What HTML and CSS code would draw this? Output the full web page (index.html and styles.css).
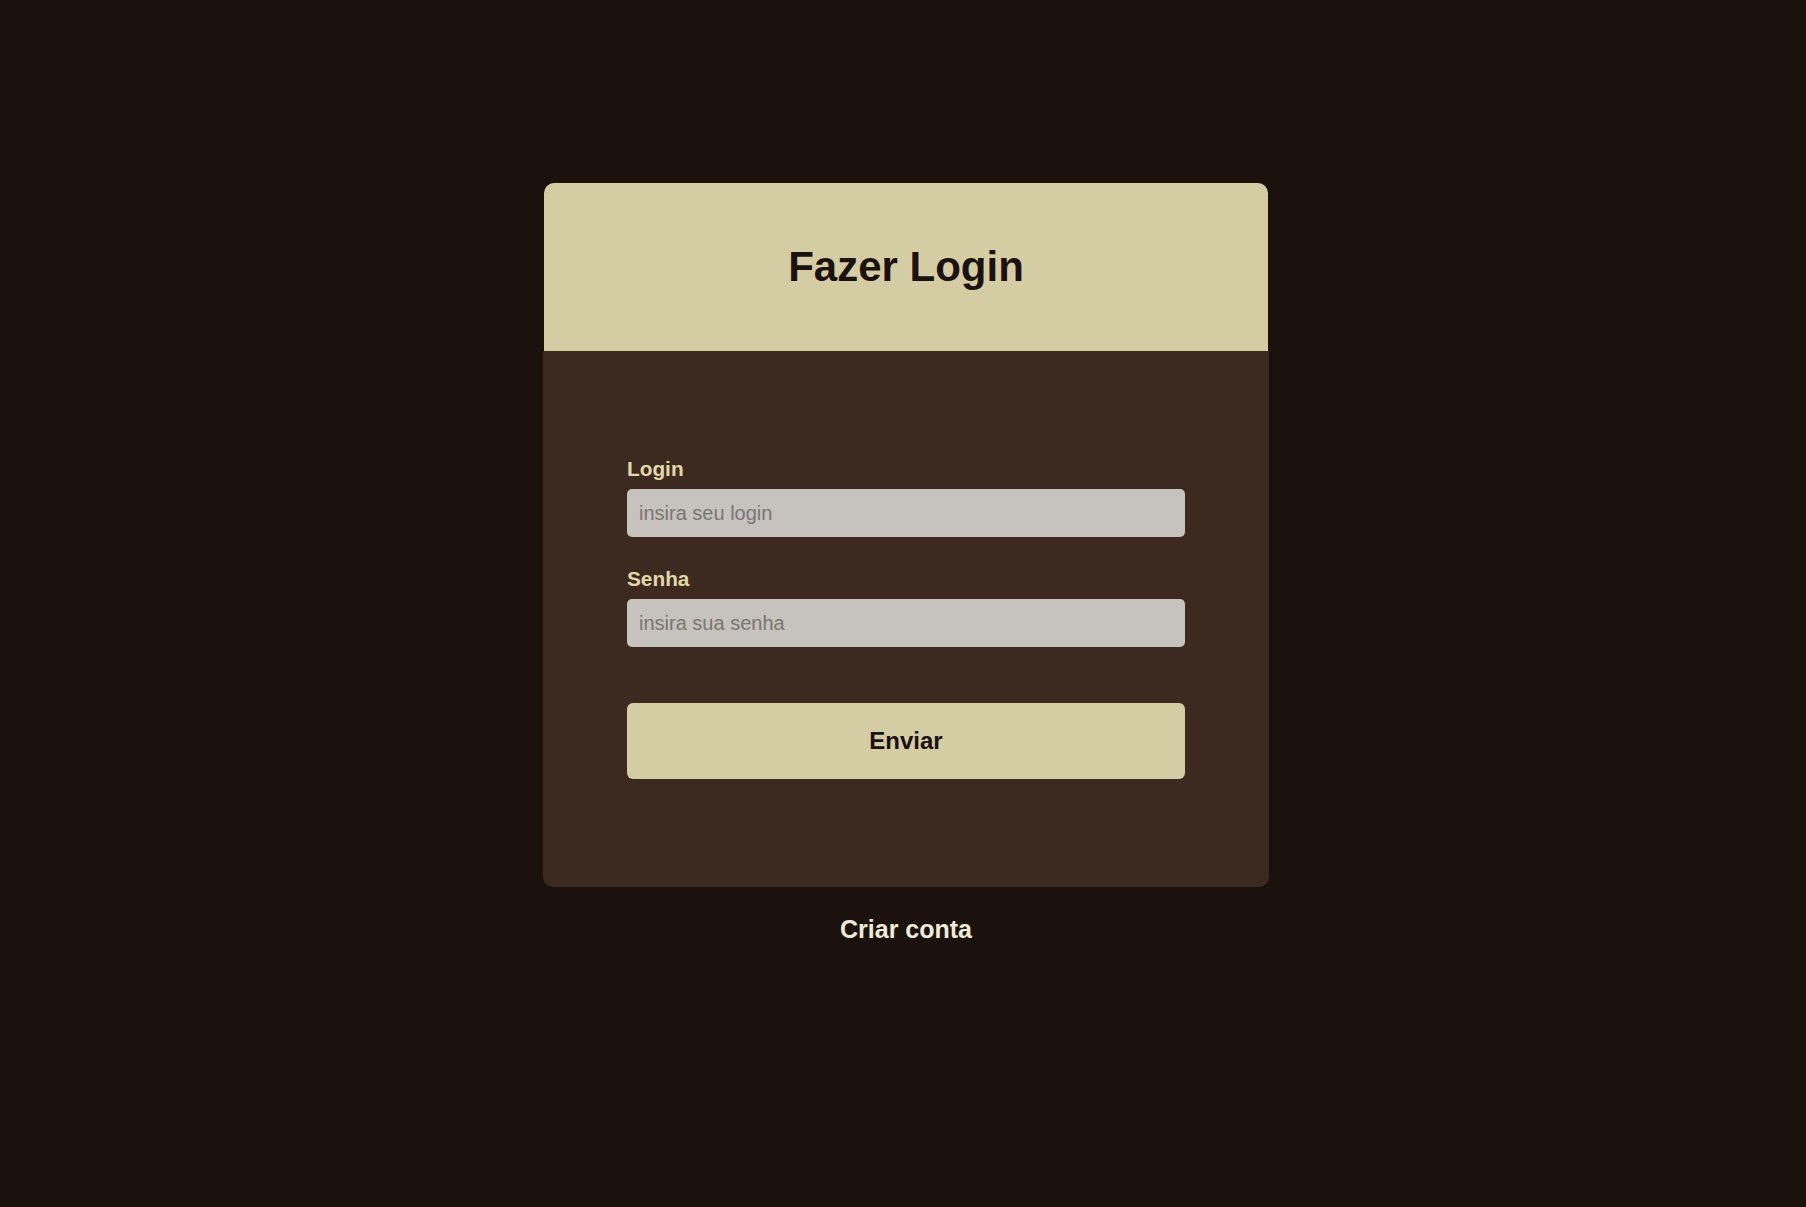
FILE: index.html
```html
<!DOCTYPE html>
<html lang="pt-BR">
<head>
<meta charset="utf-8">
<title>Fazer Login</title>
<link rel="stylesheet" href="styles.css">
</head>
<body>
<main class="page">
  <section class="card">
    <header class="card-header">
      <h1 class="title">Fazer Login</h1>
    </header>
    <form class="card-body">
      <label class="label" for="login">Login</label>
      <input class="field" id="login" type="text" placeholder="insira seu login">
      <label class="label label-second" for="senha">Senha</label>
      <input class="field" id="senha" type="password" placeholder="insira sua senha">
      <button class="submit" type="button">Enviar</button>
    </form>
  </section>
  <a class="create" href="#">Criar conta</a>
</main>
</body>
</html>
```
FILE: styles.css
```css
* { box-sizing: border-box; }
html, body {
  margin: 0;
  padding: 0;
  background: #1b120e;
  min-height: 100%;
}
body {
  font-family: "Liberation Sans", Arial, sans-serif;
}
.page {
  display: flex;
  flex-direction: column;
  align-items: center;
  padding-top: 183px;
  padding-left: 6px;
  min-height: 1207px;
}
.card {
  width: 726px;
  display: flex;
  flex-direction: column;
}
.card-header {
  margin: 0 1px;
  height: 168px;
  background: #d4cda3;
  border-radius: 10px 10px 0 0;
  display: flex;
  align-items: center;
  justify-content: center;
}
.title {
  margin: 0;
  font-size: 42px;
  font-weight: 700;
  color: #1b120e;
  line-height: 1;
}
.card-body {
  background: #3c2a21;
  border-radius: 0 0 10px 10px;
  padding: 106px 84px 108px;
  display: flex;
  flex-direction: column;
  margin: 0;
}
.label {
  font-size: 20.8px;
  font-weight: 700;
  color: #e3d7a8;
  line-height: 24px;
  margin-bottom: 8px;
}
.label-second {
  margin-top: 30px;
  margin-bottom: 8px;
}
.field {
  height: 48px;
  border: none;
  border-radius: 5px;
  background: #c6c2be;
  padding: 0 12px;
  font-family: "Liberation Sans", Arial, sans-serif;
  font-size: 20px;
  color: #333;
  outline: none;
}
.field::placeholder {
  color: #7a7571;
}
.submit {
  margin-top: 56px;
  height: 76px;
  border: none;
  border-radius: 6px;
  background: #d4cda3;
  font-family: "Liberation Sans", Arial, sans-serif;
  font-size: 24px;
  font-weight: 700;
  color: #1b120e;
  cursor: pointer;
}
.create {
  margin-top: 28px;
  font-size: 25px;
  font-weight: 700;
  color: #efecd6;
  text-decoration: none;
  line-height: 29px;
}
```
